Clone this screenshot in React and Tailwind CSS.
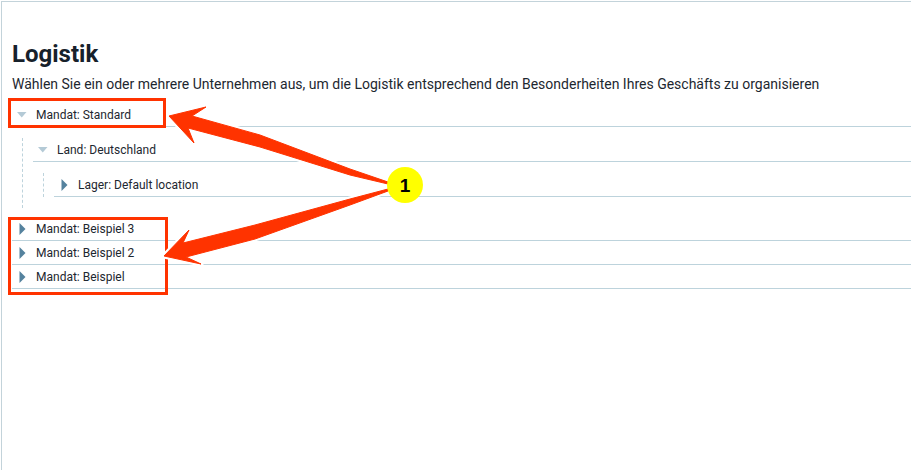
const rows = 'flex h-6 items-center border-b border-[#bdd3dc] text-[12px] text-[#1d2730]'

const arrowTop = 'M169 116L206 107L192 116L260 135L350 169L388 182L388 184L350 175L260 147L188 128L194 143Z'
const arrowBottom = 'M164 256L189 230L183 243L255 225L350 199L388 189L388 191L350 205L255 239L186 257L201 264Z'

function Expanded() {
  return (
    <svg width="10" height="6" viewBox="0 0 10 6" className="shrink-0">
      <path d="M0 0H9.5L4.75 5.5Z" fill="#b4cad6" />
    </svg>
  )
}

function Collapsed() {
  return (
    <svg width="7" height="12" viewBox="0 0 7 12" className="shrink-0">
      <path d="M0.5 0V12L6.5 6Z" fill="#55829e" />
    </svg>
  )
}

function Row({ label, open }) {
  return (
    <div className={rows}>
      {open ? (
        <span className="ml-[5px] mr-[9px] flex w-[10px] justify-center"><Expanded /></span>
      ) : (
        <span className="ml-[7px] mr-[10px] flex w-[7px] justify-center"><Collapsed /></span>
      )}
      <span>{label}</span>
    </div>
  )
}

function Annotations() {
  return (
    <svg width="911" height="470" viewBox="0 0 911 470" className="pointer-events-none absolute left-0 top-0">
      <rect x="9.5" y="99.5" width="155" height="27" fill="none" stroke="#ff3300" strokeWidth="3" />
      <rect x="9.5" y="218.5" width="157" height="75" fill="none" stroke="#ff3300" strokeWidth="3" />
      <g fill="#ffffff" stroke="#ffffff" strokeWidth="5" strokeLinejoin="round">
        <path d={arrowTop} />
        <path d={arrowBottom} />
      </g>
      <g fill="#ff3300" stroke="#ff3300" strokeWidth="1" strokeLinejoin="round">
        <path d={arrowTop} />
        <path d={arrowBottom} />
      </g>
      <circle cx="405" cy="185" r="18" fill="#ffff00" />
      <text x="405" y="192" textAnchor="middle" fontFamily="Liberation Sans" fontWeight="700" fontSize="19" fill="#000000">1</text>
    </svg>
  )
}

export default function App() {
  return (
    <div className="relative h-[470px] w-[911px] overflow-hidden bg-white pl-px pt-px font-['Roboto',sans-serif]">
      <div className="h-full border-l border-t border-[#c3d3da] pl-[10px] pt-[38px]">
        <h1 className="h-[28px] text-[24px] font-bold leading-[28px] text-[#17212b]">Logistik</h1>
        <p className="mt-[6px] h-[20px] text-[14px] leading-[20px] text-[#1d2730]">
          Wählen Sie ein oder mehrere Unternehmen aus, um die Logistik entsprechend den Besonderheiten Ihres Geschäfts zu organisieren
        </p>
        <div className="mt-[9px]">
          <Row label="Mandat: Standard" open />
          <div className="ml-[10px] mt-[11px] border-l border-dashed border-[#bdd3dc] pb-[11px] pl-[10px]">
            <Row label="Land: Deutschland" open />
            <div className="ml-[10px] mt-[11px] border-l border-dashed border-[#bdd3dc] pl-[10px]">
              <Row label="Lager: Default location" />
            </div>
          </div>
          <div className="mt-[9px]">
            <Row label="Mandat: Beispiel 3" />
            <Row label="Mandat: Beispiel 2" />
            <Row label="Mandat: Beispiel" />
          </div>
        </div>
      </div>
      <Annotations />
    </div>
  )
}
